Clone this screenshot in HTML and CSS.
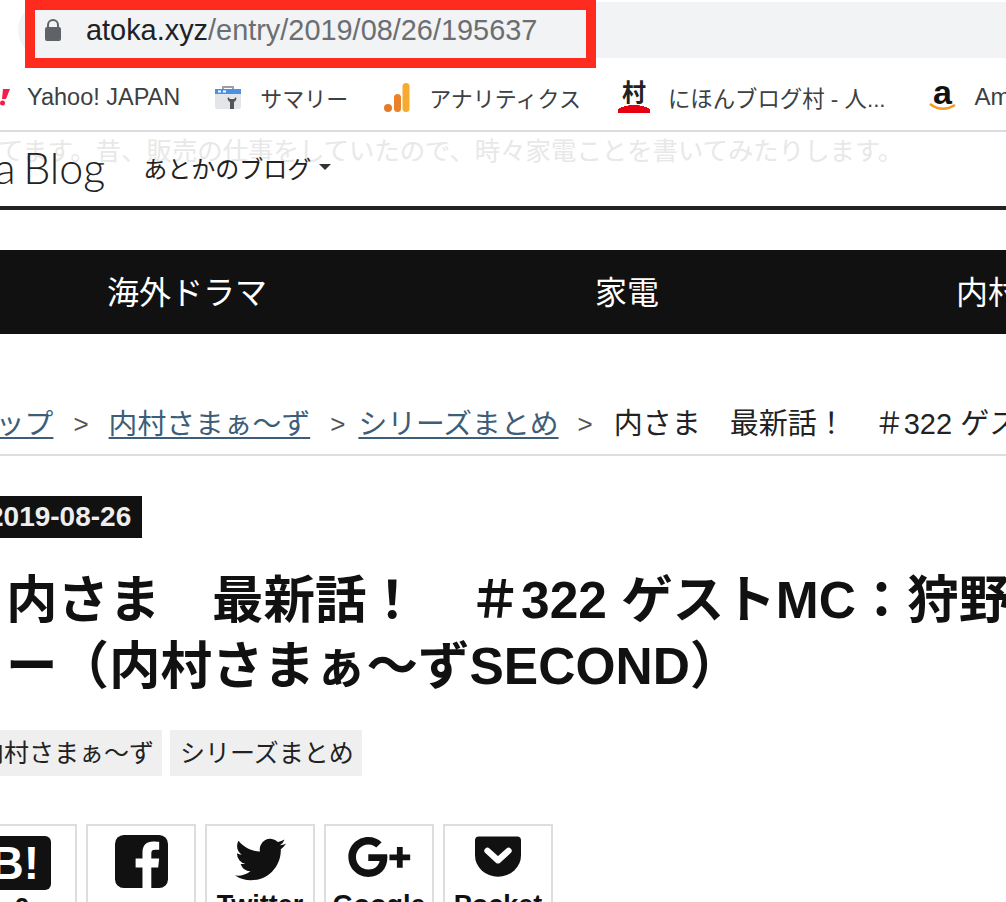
FILE: index.html
```html
<!DOCTYPE html>
<html lang="ja">
<head>
    <meta charset="UTF-8">
    <meta name="viewport" content="width=device-width, initial-scale=1.0">
    <title>内さま 最新話！ - atoka Blog</title>
    <link rel="stylesheet" href="styles.css">
</head>
<body>
    <!-- Browser address bar -->
    <div class="toolbar">
        <div class="omnibox">
            <div class="url-highlight">
                <svg class="lock" viewBox="0 0 16 22" width="16" height="22">
                    <path d="M3 9V6a5 5 0 0 1 10 0v3" fill="none" stroke="#5f6368" stroke-width="2"/>
                    <rect x="0" y="8" width="16" height="14" rx="2" fill="#5f6368"/>
                </svg>
                <span class="url"><span class="url-host">atoka.xyz</span>/entry/2019/08/26/195637</span>
            </div>
        </div>
    </div>

    <!-- Bookmarks -->
    <div class="bookmarks">
        <div class="bookmark bookmark-yahoo">
            <svg viewBox="0 0 10 20" width="10" height="20">
                <path d="M3 2h7L6 12H2z" fill="#f0204a"/>
                <circle cx="2.5" cy="16" r="2.5" fill="#f0204a"/>
            </svg>
            <span>Yahoo! JAPAN</span>
        </div>
        <div class="bookmark bookmark-summary">
            <svg viewBox="0 0 26 24" width="26" height="24">
                <path d="M8 5V2h10v3" fill="none" stroke="#9aa0a6" stroke-width="2"/>
                <rect x="0" y="4" width="26" height="20" rx="2" fill="#e3e5e8"/>
                <rect x="0" y="4" width="26" height="5" fill="#4a90e8"/>
                <rect x="3" y="5.500" width="3" height="2" fill="#fff"/>
                <rect x="8" y="5.500" width="3" height="2" fill="#fff"/>
                <path d="M13 12a4 4 0 0 0 2 5v7h4v-7a4 4 0 0 0 2-5l-2 2h-4z" fill="#555"/>
            </svg>
            <span>サマリー</span>
        </div>
        <div class="bookmark bookmark-analytics">
            <svg viewBox="0 0 26 29" width="26" height="29">
                <circle cx="4" cy="25" r="4" fill="#e37b2c"/>
                <rect x="10" y="11" width="7" height="18" rx="3.500" fill="#e8832a"/>
                <rect x="18.500" y="0" width="7" height="29" rx="3.500" fill="#f6ab2e"/>
            </svg>
            <span>アナリティクス</span>
        </div>
        <div class="bookmark bookmark-mura">
            <span class="mura-icon">村</span>
            <span>にほんブログ村 - 人...</span>
        </div>
        <div class="bookmark bookmark-amazon">
            <span class="amazon-icon">
                a
                <svg viewBox="0 0 28 10" width="28" height="10">
                    <path d="M1 2c8 6 17 6 25 1" fill="none" stroke="#f39a1f" stroke-width="2.500"/>
                </svg>
            </span>
            <span>Amazon</span>
        </div>
    </div>

    <!-- Blog header -->
    <div class="blog-bar">
        <div class="blog-desc">てます。昔、販売の仕事をしていたので、時々家電ことを書いてみたりします。</div>
        <div class="blog-title">atoka Blog</div>
        <div class="blog-menu">あとかのブログ<span class="caret"></span></div>
    </div>

    <nav class="category-nav">
        <a class="nav-first">海外ドラマ</a>
        <a class="nav-second">家電</a>
        <a class="nav-third">内村さまぁ〜ず</a>
    </nav>

    <div class="breadcrumb">
        <a href="#">トップ</a>
        <span class="sep">&gt;</span>
        <a href="#">内村さまぁ〜ず</a>
        <span class="sep sep-narrow">&gt;</span>
        <a href="#">シリーズまとめ</a>
        <span class="sep sep-last">&gt;</span>
        <span class="crumb-current">内さま　最新話！　＃322 ゲストMC：狩野英孝</span>
    </div>

    <div class="entry-date">2019-08-26</div>

    <h1 class="entry-title">内さま　最新話！　＃322 ゲストMC：狩野英孝<br>ー（内村さまぁ〜ずSECOND）</h1>

    <div class="tags">
        <a class="tag">内村さまぁ〜ず</a>
        <a class="tag">シリーズまとめ</a>
    </div>

    <!-- Share buttons -->
    <div class="share">
        <div class="share-btn">
            <div class="share-icon">
                <svg class="icon-hatena" viewBox="0 0 58 54" width="58" height="54">
                    <rect width="58" height="54" rx="6" fill="#111"/>
                    <text x="46" y="43" class="hatena-mark">B!</text>
                </svg>
            </div>
            <span class="share-count">0</span>
        </div>
        <div class="share-btn">
            <div class="share-icon">
                <svg class="icon-facebook" viewBox="0 0 54 54" width="53" height="53">
                    <rect width="54" height="54" rx="9" fill="#111"/>
                    <path d="M37 54V33h7l1-9h-8v-5c0-3 1-4 4-4h4V7c-1 0-3-.3-6-.3-7 0-11 4-11 11V24h-7v9h7v21z" fill="#fff"/>
                </svg>
            </div>
        </div>
        <div class="share-btn">
            <div class="share-icon">
                <svg viewBox="0 0 24 24" width="51" height="51">
                    <path d="M23.953 4.57a10 10 0 01-2.825.775 4.958 4.958 0 002.163-2.723c-.951.555-2.005.959-3.127 1.184a4.92 4.92 0 00-8.384 4.482C7.69 8.095 4.067 6.13 1.64 3.162a4.822 4.822 0 00-.666 2.475c0 1.71.87 3.213 2.188 4.096a4.904 4.904 0 01-2.228-.616v.06a4.923 4.923 0 003.946 4.827 4.996 4.996 0 01-2.212.085 4.936 4.936 0 004.604 3.417 9.867 9.867 0 01-6.102 2.105c-.39 0-.779-.023-1.17-.067a13.995 13.995 0 007.557 2.209c9.053 0 13.998-7.496 13.998-13.985 0-.21 0-.42-.015-.63A9.935 9.935 0 0024 4.59z" fill="#111"/>
                </svg>
            </div>
            <span>Twitter</span>
        </div>
        <div class="share-btn">
            <div class="share-icon">
                <svg class="icon-google" viewBox="0 0 38 24" width="63" height="40">
                    <path d="M12.24 10.285V14.4h6.806c-.275 1.765-2.056 5.174-6.806 5.174-4.095 0-7.439-3.389-7.439-7.574s3.345-7.574 7.439-7.574c2.33 0 3.891.989 4.785 1.849l3.254-3.138C18.189 1.186 15.479 0 12.24 0c-6.635 0-12 5.365-12 12s5.365 12 12 12c6.926 0 11.52-4.869 11.52-11.726 0-.788-.085-1.39-.189-1.989H12.24z" fill="#111"/>
                    <path d="M29.500 6h3.500v4.500h4.500V14H33v4.500h-3.500V14H25v-3.500h4.500z" fill="#111"/>
                </svg>
            </div>
            <span>Google</span>
        </div>
        <div class="share-btn">
            <div class="share-icon">
                <svg class="icon-pocket" viewBox="0 0 48 42" width="46" height="41">
                    <path d="M4 0h40a4 4 0 0 1 4 4v16a24 22 0 0 1-48 0V4a4 4 0 0 1 4-4z" fill="#111"/>
                    <path d="M13 15l11 10 11-10" fill="none" stroke="#fff" stroke-width="6.500" stroke-linecap="round" stroke-linejoin="round"/>
                </svg>
            </div>
            <span>Pocket</span>
        </div>
    </div>
</body>
</html>
```

FILE: styles.css
```css
html, body {
    margin: 0;
    padding: 0;
}
body {
    width: 1006px;
    height: 902px;
    overflow: hidden;
    background-color: #fff;
    color: #111;
    font-family: "Liberation Sans", "Noto Sans CJK JP", sans-serif;
}
a {
    color: inherit;
}
/* Browser chrome */
.toolbar {
    height: 68px;
    padding: 2px 0 0 18px;
    box-sizing: border-box;
}
.omnibox {
    height: 56px;
    position: relative;
    background-color: #f1f3f4;
    border-radius: 28px 0 0 28px;
}
.url-highlight {
    position: absolute;
    left: 7px;
    top: -2px;
    width: 541px;
    height: 40px;
    padding: 0 0 8px 10px;
    border: 10px solid #ff2b1f;
    background-color: #f1f3f4;
    display: flex;
    align-items: center;
    gap: 25px;
    box-sizing: content-box;
}
.lock {
    flex: none;
}
.url {
    font-size: 28.9px;
    color: #6b6e72;
    white-space: nowrap;
}
.url-host {
    color: #202124;
}
.bookmarks {
    height: 58px;
    padding-bottom: 4px;
    display: flex;
    align-items: center;
    border-bottom: 2px solid #dadce0;
    font-size: 22px;
    color: #3c4043;
    white-space: nowrap;
}
.bookmark {
    display: flex;
    align-items: center;
    flex: none;
}
.bookmark-yahoo {
    gap: 17px;
    font-size: 23.5px;
}
.bookmark-summary {
    gap: 19px;
    margin-left: 35px;
}
.bookmark-analytics {
    gap: 19px;
    margin-left: 36px;
}
.bookmark-mura {
    gap: 18px;
    margin-left: 37px;
    font-size: 22.4px;
}
.bookmark-amazon {
    gap: 18px;
    margin-left: 43px;
    font-size: 24px;
}
.mura-icon {
    width: 32px;
    height: 32px;
    font-size: 24px;
    font-weight: bold;
    line-height: 24px;
    text-align: center;
    color: #222;
    background: radial-gradient(ellipse 18px 8px at 50% 100%, #e60012 98%, transparent 100%);
}
.amazon-icon {
    width: 28px;
    height: 34px;
    display: flex;
    flex-direction: column;
    align-items: center;
    font-size: 34px;
    font-weight: bold;
    line-height: 24px;
    color: #111;
}
.amazon-icon svg {
    margin-top: -2px;
}
/* Blog bar */
.blog-bar {
    position: relative;
    height: 74px;
    display: flex;
    align-items: center;
    border-bottom: 4px solid #222;
    white-space: nowrap;
}
.blog-desc {
    position: absolute;
    left: -2px;
    top: 5px;
    font-size: 25.4px;
    line-height: 28px;
    color: #e8e8e8;
}
.blog-title {
    position: relative;
    margin: -4px 0 0 -85px;
    font-family: "Lato", sans-serif;
    font-weight: 300;
    font-size: 43px;
    word-spacing: -4px;
    color: #222;
    flex: none;
}
.blog-menu {
    position: relative;
    margin: -4px 0 0 38px;
    font-size: 24px;
    color: #222;
    display: flex;
    align-items: center;
}
.caret {
    width: 0;
    height: 0;
    margin-left: 8px;
    border-left: 6px solid transparent;
    border-right: 6px solid transparent;
    border-top: 6px solid #333;
}
.category-nav {
    height: 80px;
    padding-bottom: 4px;
    margin-top: 40px;
    display: flex;
    align-items: center;
    background-color: #111;
    color: #fff;
    font-size: 32px;
    white-space: nowrap;
    overflow: hidden;
}
.nav-first {
    margin-left: 107px;
}
.nav-second {
    margin-left: 328px;
}
.nav-third {
    margin-left: 297px;
}
/* Breadcrumb */
.breadcrumb {
    height: 70px;
    margin-top: 52px;
    margin-left: -33px;
    padding-top: 18px;
    box-sizing: border-box;
    display: flex;
    align-items: flex-start;
    border-bottom: 2px solid #ddd;
    font-size: 28.8px;
    line-height: 40px;
    white-space: nowrap;
}
.breadcrumb a {
    color: #3d5d78;
    text-decoration: underline;
    text-decoration-thickness: 2px;
    text-underline-offset: 3px;
}
.sep {
    margin: 0 20px;
    color: #555;
    font-size: 26px;
}
.sep-narrow {
    margin-right: 13px;
}
.sep-last {
    margin: 0 21px 0 19px;
}
.crumb-current {
    color: #222;
    font-size: 29px;
}
/* Entry header */
.entry-date {
    width: max-content;
    margin: 40px 0 0 -23px;
    padding: 0 11px;
    background-color: #111;
    color: #eee;
    font-size: 28px;
    font-weight: bold;
    line-height: 42px;
}
.entry-title {
    margin: 29px 0 0 6px;
    font-size: 51.5px;
    font-weight: bold;
    line-height: 66px;
    white-space: nowrap;
}
.tags {
    display: flex;
    gap: 8px;
    margin: 31px 0 0 -31px;
}
.tag {
    padding: 0 8px 0 10px;
    background-color: #efefef;
    color: #222;
    font-size: 25px;
    line-height: 46px;
    white-space: nowrap;
}
/* Share buttons */
.share {
    display: flex;
    gap: 9px;
    margin: 48px 0 0 -33px;
}
.share-btn {
    flex: none;
    width: 110px;
    height: 120px;
    padding-top: 8px;
    box-sizing: border-box;
    border: 2px solid #ddd;
    text-align: center;
    font-size: 27px;
    font-weight: bold;
    line-height: 30px;
}
.share-icon {
    height: 56px;
    display: flex;
    justify-content: center;
    align-items: flex-start;
}
.share-count {
    display: block;
    margin-top: 3px;
}
.icon-hatena {
    margin-top: 2px;
}
.icon-facebook {
    margin-top: 1px;
}
.icon-google {
    margin-top: 3px;
}
.icon-pocket {
    margin-top: 2px;
}
.hatena-mark {
    fill: #fff;
    font-size: 46px;
    font-weight: bold;
    text-anchor: end;
}
```
